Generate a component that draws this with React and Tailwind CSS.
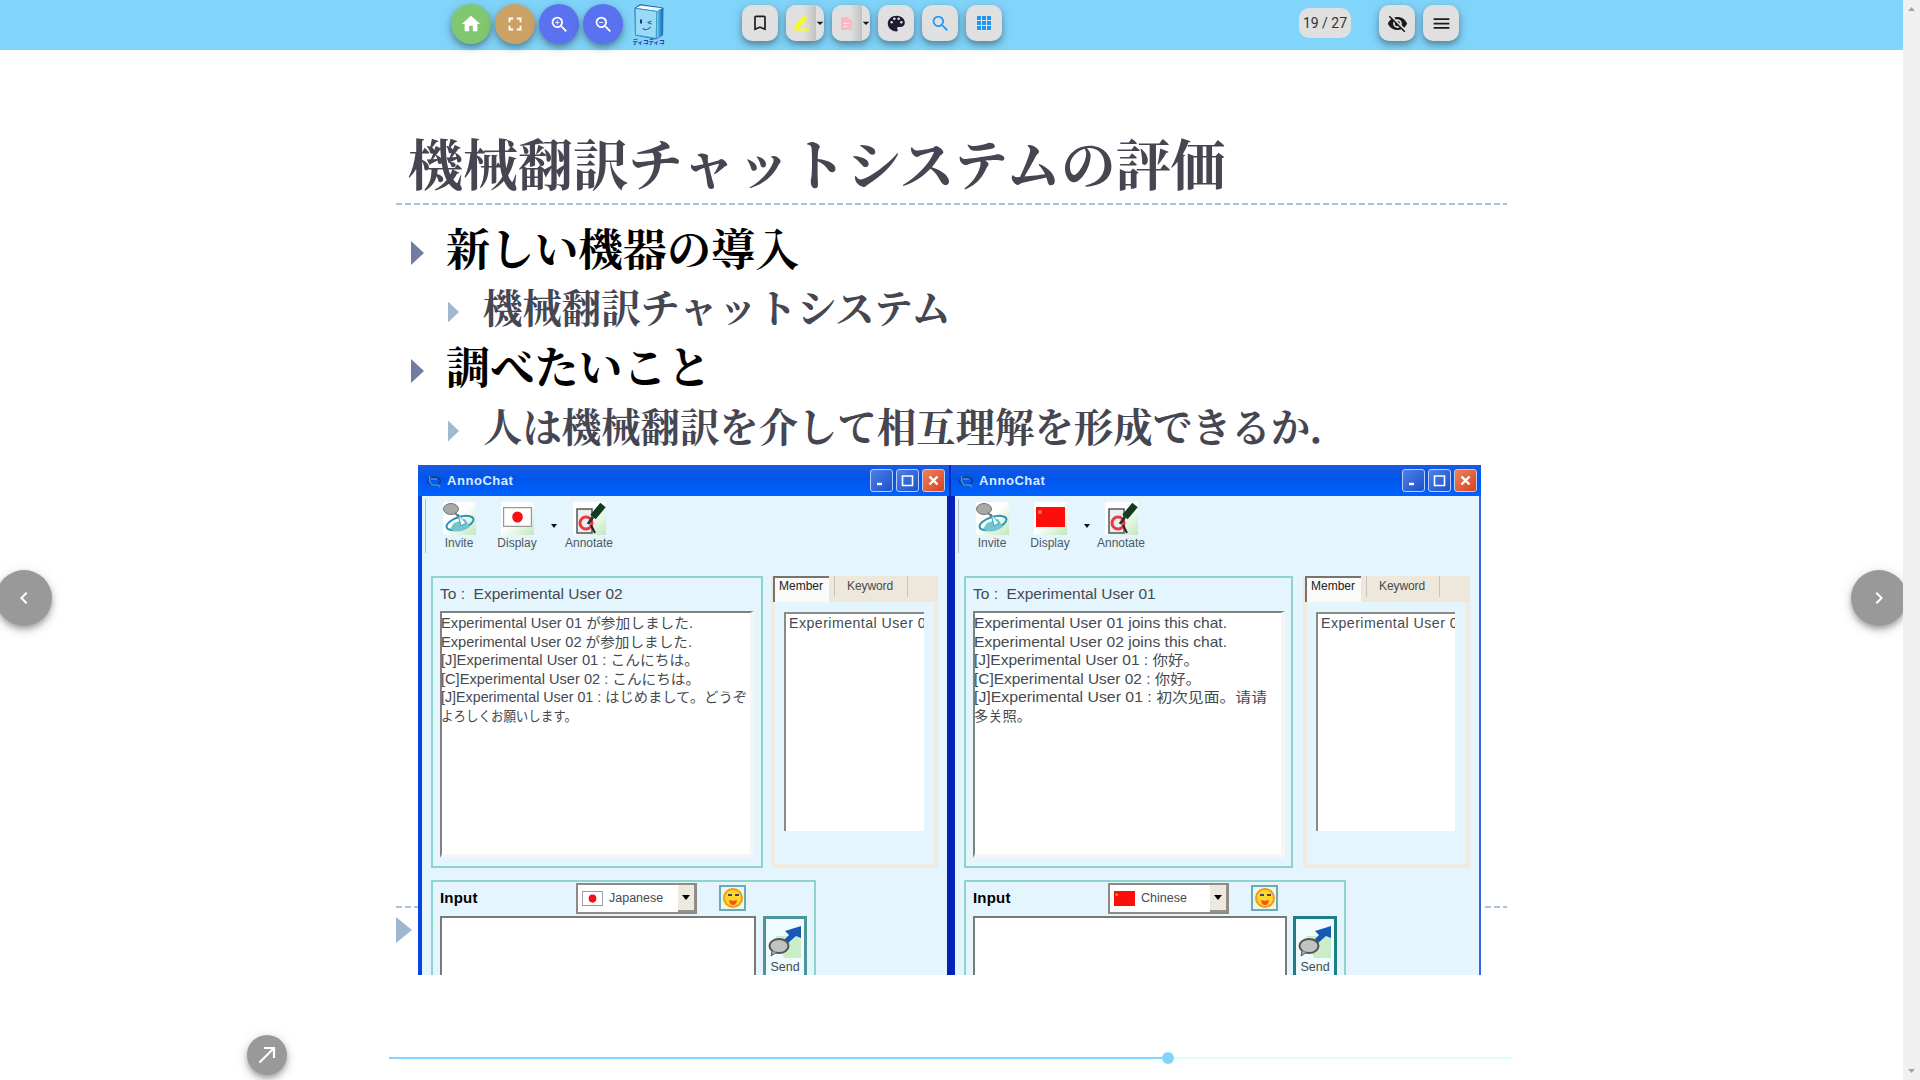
import React from "react";
import {
  MdHome, MdFullscreen, MdZoomIn, MdZoomOut, MdBookmarkBorder,
  MdSearch, MdMenu, MdArrowDropDown, MdChevronLeft, MdChevronRight,
} from "react-icons/md";

const elevation = "shadow-[0_3px_5px_rgba(0,0,0,0.22),0_5px_10px_rgba(0,0,0,0.14),0_1px_16px_rgba(0,0,0,0.08)]";
const tile = "flex h-9 w-9 items-center justify-center rounded-[10px] bg-[#e0e0e0] " + elevation;
const round = "flex h-10 w-10 items-center justify-center rounded-full text-white " + elevation;

function Mdi({ d, className = "" }) {
  return <svg viewBox="0 0 24 24" width="21" height="21" className={className} fill="currentColor"><path d={d} /></svg>;
}

function BookLogo() {
  return (
    <div className="ml-[10px] flex h-[42px] w-[31px] flex-col items-center">
      <svg width="30" height="36" viewBox="0 0 30 36" className="shrink-0">
        <defs>
          <linearGradient id="spine" x1="0" x2="1"><stop offset="0" stopColor="#7fe0f5" /><stop offset=".5" stopColor="#2f9fd8" /><stop offset="1" stopColor="#1c6fb5" /></linearGradient>
        </defs>
        <path d="M1 4 L6 .6 L29 4 L28.6 31 L22 35 L1.5 31Z" fill="#2b86c5" stroke="#2a6bb0" strokeWidth="1" />
        <path d="M2 4 L6.5 1.4 L28 4.2 L23 7Z" fill="#f4fbff" />
        <path d="M23 7.4 L28.6 4.6 L28.2 31 L22.6 34.4Z" fill="url(#spine)" />
        <path d="M1.2 4.4 L22.8 7.4 L22.2 34.4 L1.6 31Z" fill="#97dcf4" stroke="#3a8cc8" strokeWidth=".8" />
        <path d="M7 15.500v4" stroke="#2b2b9c" strokeWidth="2" />
        <path d="M13.500 18.500l4-1.200M14.500 19l3 1M8.500 24.500q4.500 3 8-1.500" stroke="#3b4fae" strokeWidth="1.100" fill="none" />
      </svg>
      <span className="-mt-px whitespace-nowrap font-['Noto_Sans_CJK_JP',sans-serif] text-[5.500px] font-black leading-[7px] text-[#3338a8]">ディコディコ</span>
    </div>
  );
}

function SplitTile({ children, className }) {
  return (
    <div className={"flex h-9 w-[38px] overflow-hidden rounded-[10px] bg-[#e0e0e0] " + elevation}>
      <div className={"flex w-[30px] items-center justify-center bg-linear-to-r from-[#e0e0e0] from-60% to-[#c2c2c2] " + className}>{children}</div>
      <div className="flex w-2 items-center justify-center"><MdArrowDropDown className="shrink-0 text-[#1b1b1b]" size={16} /></div>
    </div>
  );
}

function Header() {
  return (
    <header className="flex h-[50px] bg-[#81d4fa] pl-[451px]">
      <div className="flex gap-1 pt-1">
        <div className={round + " bg-[#81c670]"}><MdHome size={22} /></div>
        <div className={round + " bg-[#cba165]"}><MdFullscreen size={22} /></div>
        <div className={round + " bg-[#5b72f0]"}><MdZoomIn size={21} /></div>
        <div className={round + " bg-[#5b72f0]"}><MdZoomOut size={21} /></div>
      </div>
      <div className="w-[119px] pt-1"><BookLogo /></div>
      <div className="flex gap-2 pt-[5px] text-[#1b1b1b]">
        <div className={tile}><MdBookmarkBorder size={20} /></div>
        <SplitTile className="text-[#ffff00]">
          <svg width="15" height="15" viewBox="0 0 15 15" fill="currentColor"><path d="M0 12.500h15v2H0zM2 11V8.300L8.200 2.100l2.700 2.700L4.700 11zM9 1.400L10.100.3q.5-.5 1 0l1.600 1.600q.5.500 0 1L11.600 4z" /></svg>
        </SplitTile>
        <SplitTile className="text-[#ffb6c1]">
          <svg width="12" height="13" viewBox="0 0 12 13" fill="currentColor"><path d="M1.500 0H7l4 4v7.500A1.500 1.500 0 0 1 9.500 13h-8A1.500 1.500 0 0 1 0 11.500v-10A1.500 1.500 0 0 1 1.500 0Z" /><path d="M2.500 6.500h6M2.500 9.500h4" stroke="#efefef" strokeWidth="1.200" /></svg>
        </SplitTile>
        <div className={tile}><Mdi className="text-[#201c30]" d="M17.500,12A1.500,1.500 0 0,1 16,10.500A1.500,1.500 0 0,1 17.500,9A1.500,1.500 0 0,1 19,10.500A1.500,1.500 0 0,1 17.500,12M14.500,8A1.500,1.500 0 0,1 13,6.500A1.500,1.500 0 0,1 14.500,5A1.500,1.500 0 0,1 16,6.500A1.500,1.500 0 0,1 14.500,8M9.500,8A1.500,1.500 0 0,1 8,6.500A1.500,1.500 0 0,1 9.500,5A1.500,1.500 0 0,1 11,6.500A1.500,1.500 0 0,1 9.500,8M6.500,12A1.500,1.500 0 0,1 5,10.500A1.500,1.500 0 0,1 6.500,9A1.500,1.500 0 0,1 8,10.500A1.500,1.500 0 0,1 6.500,12M12,3C6.500,3 2,7 2,12C2,17 6.500,21 12,21A1.500,1.500 0 0,0 13.500,19.500C13.500,19.110 13.350,18.760 13.110,18.500C12.880,18.230 12.730,17.880 12.730,17.500A1.500,1.500 0 0,1 14.230,16H16A5,5 0 0,0 21.500,11C21.500,6.580 17.500,3 12,3Z" /></div>
        <div className={tile}><MdSearch size={21} className="text-[#2196f3]" /></div>
        <div className={tile}>
          <svg width="14" height="14" viewBox="0 0 14 14" fill="#2196f3">{[0, 5, 10].map((y) => [0, 5, 10].map((x) => <rect key={x + "-" + y} x={x} y={y} width="4" height="4" />))}</svg>
        </div>
      </div>
      <div className="ml-[297px] mt-2 flex h-[30px] w-[52px] items-center justify-center rounded-[10px] bg-[#e0e0e0] font-['Roboto',sans-serif] text-sm text-[#333]">19 / 27</div>
      <div className="ml-7 flex gap-2 pt-[5px] text-[#1b1b1b]">
        <div className={tile}><Mdi d="M11.830,9L15,12.160C15,12.110 15,12.050 15,12A3,3 0 0,0 12,9C11.940,9 11.890,9 11.830,9M7.530,9.800L9.080,11.350C9.030,11.560 9,11.770 9,12A3,3 0 0,0 12,15C12.220,15 12.440,14.970 12.650,14.920L14.200,16.470C13.530,16.800 12.790,17 12,17A5,5 0 0,1 7,12C7,11.210 7.200,10.470 7.530,9.800M2,4.270L4.280,6.550L4.730,7C3.080,8.300 1.780,10 1,12C2.730,16.390 7,19.500 12,19.500C13.550,19.500 15.030,19.200 16.380,18.660L16.810,19.080L19.730,22L21,20.730L3.270,3M12,7A5,5 0 0,1 17,12C17,12.640 16.870,13.260 16.640,13.820L19.570,16.750C21.070,15.500 22.270,13.860 23,12C21.270,7.610 17,4.500 12,4.500C10.600,4.500 9.260,4.750 8,5.200L10.170,7.350C10.740,7.130 11.350,7 12,7Z" /></div>
        <div className={tile}><MdMenu size={21} /></div>
      </div>
    </header>
  );
}

function Bullet({ sub, text, className }) {
  return (
    <li className={"flex items-center " + className}>
      <svg width="13" height="24" viewBox="0 0 13 24" className={sub ? "mt-[5px] shrink-0" : "mt-[6px] shrink-0"}><path d={sub ? "M0 1.500L11 12L0 22.500Z" : "M0 0L13 12L0 24Z"} fill={sub ? "#a0b8d0" : "#727ca3"} /></svg>
      <span className={"-mt-[5px] ml-[22px] whitespace-nowrap font-bold " + (sub ? "text-[39.400px] text-[#464653]" : "text-[44.200px] text-black")}>{text}</span>
    </li>
  );
}

function Flag({ cn, className = "" }) {
  return cn
    ? <svg viewBox="0 0 30 20" preserveAspectRatio="none" className={className}><path fill="#fa0f0c" d="M0 0h30v20H0z" /><circle cx="4" cy="5" r="2" fill="#ff8a1c" /></svg>
    : <svg viewBox="0 0 30 20" preserveAspectRatio="none" className={className}><path fill="#fff" stroke="#999" strokeWidth="1.500" d="M.5.5h29v19H.5z" /><circle cx="15" cy="10" r="5.500" fill="#fa1010" /></svg>;
}

function Tool({ label, className, children }) {
  return (
    <div className={"flex flex-col items-center " + className}>
      <div className="flex h-[33px] w-[33px] items-center justify-center bg-linear-to-br from-white from-45% to-[#bfe8bd]">{children}</div>
      <span className="whitespace-nowrap text-[12px] leading-4 text-[#505860]">{label}</span>
    </div>
  );
}

function CaptionButton({ close, children }) {
  return (
    <div className={"flex h-[23px] w-[23px] items-center justify-center rounded-[3px] border border-[#b9cdf5] " + (close ? "bg-linear-to-br from-[#f08058] to-[#d8401c]" : "bg-linear-to-br from-[#4c80ea] to-[#1f50cc]")}>
      <svg width="15" height="15" viewBox="0 0 15 15" stroke="white" fill="none" strokeWidth="2.400">{children}</svg>
    </div>
  );
}

function ChatWindow({ cn, to, lines, width }) {
  return (
    <section className={"flex h-[510px] flex-col overflow-hidden bg-[#e4f5fe] text-[#454a50] " + width}>
      <div className={"flex h-[31px] shrink-0 items-center bg-linear-to-b from-[#1a5be0] via-[#0055ea] via-40% to-[#0062ff] " + (cn ? "pl-[7px]" : "border-r-2 border-[#0a2cc0] pl-2")}>
        <svg width="16" height="16" viewBox="0 0 16 16" fill="none" stroke="#123b78" strokeWidth="1.400"><ellipse cx="8" cy="8" rx="6.500" ry="4" /><path d="M4 3Q2 8 6 12h6l2 2M5 6h6" stroke="#4c8fd8" /></svg>
        <span className="ml-[5px] w-[423px] text-[13px] font-bold tracking-[0.55px] text-[#dce9ff]">AnnoChat</span>
        <div className="flex gap-[3px]">
          <CaptionButton><path d="M3 11h5" /></CaptionButton>
          <CaptionButton><path d="M2.500 3h10v9.500h-10z" strokeWidth="1.600" /></CaptionButton>
          <CaptionButton close><path d="M3.500 3.500l8 8M11.500 3.500l-8 8" /></CaptionButton>
        </div>
      </div>
      <div className={"flex grow flex-col border-l-4 " + (cn ? "border-l-[#0524bc] border-r-2 border-r-[#2e68e8]" : "border-l-[#0a44e0] border-r-4 border-r-[#0420b8]")}>
        <div className="ml-[3px] mt-[3px] flex h-[54px] border-l border-[#b5bdc0]">
          <Tool label="Invite" className="ml-[11px] w-[44px] pt-[3px]">
            <svg width="33" height="33" viewBox="0 0 33 33" fill="none"><ellipse cx="17" cy="21" rx="14" ry="6" stroke="#2397b5" strokeWidth="2" transform="rotate(-18 17 21)" /><path d="M7 27q8 6 20-2l-5-8-11 4Z" fill="#72c5ce" /><path d="M15 12l8 9-5 3Z" fill="#e9fbff" stroke="#3ba4bb" /><ellipse cx="8" cy="7" rx="7.500" ry="5.500" fill="#a5aaa8" stroke="#777" /><path d="M12 11l4 4" stroke="#777" strokeWidth="2" /></svg>
          </Tool>
          <Tool label="Display" className="ml-[13px] w-[46px] pt-[3px]"><Flag cn={cn} className="mb-1 h-[20px] w-[29px]" /></Tool>
          <div className="ml-[11px] mt-[25px] h-[4px] w-[6px] bg-[#111] [clip-path:polygon(0_0,100%_0,50%_100%)]" />
          <Tool label="Annotate" className={(cn ? "ml-[4px]" : "ml-[5px]") + " w-[54px] pt-[3px]"}>
            <svg width="33" height="33" viewBox="0 0 33 33" fill="none"><path d="M4 7h15v24H4z" fill="#eaf0ee" stroke="#555" strokeWidth="1.500" /><circle cx="13" cy="21" r="6" stroke="#ee3540" strokeWidth="3" /><path d="M30 3L20 15" stroke="#123c20" strokeWidth="7" /><path d="M20 15l-5 7" stroke="#333" strokeWidth="3" /><path d="M18 23l4 8" stroke="#222" strokeWidth="2" /></svg>
          </Tool>
        </div>
        <div className="ml-[9px] mt-[23px] flex h-[292px] shrink-0">
          <div className={"flex shrink-0 flex-col border-2 border-[#8fd3cd] pl-[7px] " + (cn ? "w-[329px]" : "w-[332px]")}>
            <div className="h-[33px] whitespace-pre text-[15.500px] leading-[31px]">{to}</div>
            <div className={"h-[247px] border-l-2 border-t-2 border-r-4 border-b-4 border-l-[#81817e] border-t-[#81817e] border-b-[#f5f6f5] border-r-[#f5f6f5] bg-white text-[14.200px] leading-[18.500px] " + (cn ? "w-[312px]" : "w-[314px]")}>
              {lines.map((l) => (
                <svg key={l[0]} className="block overflow-visible" width={l[1]} height="18.500"><text x="-1" y="14.500" fill="#454a50" textLength={l[1]} lengthAdjust="spacingAndGlyphs">{l[0]}</text></svg>
              ))}
            </div>
          </div>
          <div className={"flex w-[167px] shrink-0 flex-col border-4 border-t-0 border-[#f0ebe1] " + (cn ? "ml-[10px]" : "ml-2")}>
            <div className="-mx-1 flex h-[26px] shrink-0 bg-[#eee8dc] text-[12px] leading-[20px]">
              <div className="ml-[2px] w-[56px] border-l-2 border-t-2 border-[#77736d] bg-[#fafaf8] pl-[4px] leading-[17px] text-[#222]">Member</div>
              <div className="ml-[5px] h-[21px] w-[74px] border-x border-[#c6c4bd] pl-[12px] tracking-[-0.1px]">Keyword</div>
            </div>
            <div className={"ml-[9px] mt-[10px] h-[219px] overflow-hidden border-l-2 border-t-2 border-[#8b8b88] bg-white pl-[3px] text-[14.200px] leading-[18.500px] " + (cn ? "w-[139px]" : "w-[140px]")}>
              <span className="whitespace-nowrap tracking-[0.45px]">Experimental User {cn ? "02" : "01"}</span>
            </div>
          </div>
        </div>
        <div className={"ml-[9px] mt-[12px] flex h-[110px] shrink-0 flex-col border-2 border-[#8fd3cd] pl-[7px] " + (cn ? "w-[382px]" : "w-[385px]")}>
          <div className="flex h-[34px] shrink-0">
            <b className={"text-[15px] leading-[31px] tracking-[0.2px] text-black " + (cn ? "w-[135px]" : "w-[136px]")}>Input</b>
            <div className="mt-px flex h-[31px] w-[121px] items-center border-2 border-[#918983] bg-white pl-1">
              <Flag cn={cn} className="h-[15px] w-[21px]" />
              <span className="ml-1.5 w-[69px] text-[12.500px]">{cn ? "Chinese" : "Japanese"}</span>
              <div className="flex h-[27px] w-[17px] items-center justify-center border-b-2 border-r border-[#96918a] bg-[#ece9df]"><div className="h-[5px] w-[8px] bg-black [clip-path:polygon(0_0,100%_0,50%_100%)]" /></div>
            </div>
            <div className="ml-[22px] mt-[3px] flex h-[26px] w-[27px] items-center justify-center border-2 border-[#6da9b8] bg-[#eaf8e8]">
              <svg width="22" height="22" viewBox="0 0 22 22"><circle cx="11" cy="11" r="9" fill="#ffd82b" stroke="#f5971d" strokeWidth="2" /><path d="M6 8h4M13 8h4" stroke="#446" strokeWidth="2" /><path d="M7 13q4 1.500 8 0-.5 5-4 5t-4-5Z" fill="#f45420" /></svg>
            </div>
          </div>
          <div className={"flex h-[74px] shrink-0 " + (cn ? "gap-[6px]" : "gap-[7px]")}>
            <div className={"border-2 border-[#777a77] bg-white " + (cn ? "w-[314px]" : "w-[316px]")} />
            <div className={"flex w-[44px] flex-col items-center border-[3px] bg-[#f0fbff] pt-[7px] " + (cn ? "border-[#1c7f85]" : "border-[#4c969b]")}>
              <svg width="34" height="32" viewBox="0 0 34 32" className="shrink-0"><path d="M8 10H33V32H16Z" fill="#c9edc6" /><path d="M15 15L21 9L17 5L33 0V12L28 10L20 17Z" fill="#1559b5" /><ellipse cx="11" cy="20" rx="9.500" ry="7" fill="#bfc3c2" stroke="#555" strokeWidth="2" /><path d="M4 25l-1 5 6-4" fill="#aaa" stroke="#555" /></svg>
              <span className="text-[12.500px] leading-[18px]">Send</span>
            </div>
          </div>
        </div>
      </div>
    </section>
  );
}

const Dashes = ({ w }) => <svg width={w} height="2" className="block shrink-0"><path d={"M0 1H" + w} stroke="#a9c2da" strokeWidth="2" strokeDasharray="6 3" /></svg>;

const japaneseLog = [
  ["Experimental User 01 が参加しました.", 252],
  ["Experimental User 02 が参加しました.", 251],
  ["[J]Experimental User 01 : こんにちは。", 258],
  ["[C]Experimental User 02 : こんにちは。", 259],
  ["[J]Experimental User 01 : はじめまして。どうぞ", 306],
  ["よろしくお願いします。", 136],
];
const chineseLog = [
  ["Experimental User 01  joins this chat.", 253],
  ["Experimental User 02  joins this chat.", 253],
  ["[J]Experimental User 01 : 你好。", 225],
  ["[C]Experimental User 02 : 你好。", 227],
  ["[J]Experimental User 01 : 初次见面。请请", 293],
  ["多关照。", 57],
];

function Slide() {
  return (
    <main className="flex h-[1030px] flex-col bg-white font-['Noto_Serif_CJK_JP','Noto_Sans_CJK_JP',serif]">
      <h1 className="ml-[408px] mt-[79px] h-[74px] whitespace-nowrap text-[55px] font-bold leading-[65px] text-[#464653]">機械翻訳チャットシステムの評価</h1>
      <div className="ml-[396px] flex"><Dashes w={1111} /></div>
      <ul className="ml-[411px] flex h-[260px] shrink-0 flex-col">
        <Bullet text="新しい機器の導入" className="mt-[13px] h-[64px]" />
        <Bullet sub text="機械翻訳チャットシステム" className="ml-[37px] h-[54px]" />
        <Bullet text="調べたいこと" className="h-[64px]" />
        <Bullet sub text="人は機械翻訳を介して相互理解を形成できるか．" className="ml-[37px] h-[56px]" />
      </ul>
      <div className="ml-[396px] flex h-[510px] shrink-0 font-['Liberation_Sans','Noto_Sans_CJK_JP','Noto_Sans_CJK_SC',sans-serif]">
        <div className="w-[22px] pt-[441px]">
          <Dashes w={22} />
          <svg width="16" height="26" viewBox="0 0 16 26" className="mt-[9px]"><path d="M0 0L16 13L0 26Z" fill="#9fb8d1" /></svg>
        </div>
        <ChatWindow to="To :  Experimental User 02" lines={japaneseLog} width="w-[533px]" />
        <ChatWindow cn to="To :  Experimental User 01" lines={chineseLog} width="w-[530px]" />
        <div className="ml-1 w-[22px] pt-[441px]"><Dashes w={22} /></div>
      </div>
      <div className="ml-[389px] mt-[77px] flex h-3 w-[1124px] shrink-0 items-center">
        <div className="h-[2px] w-[773px] bg-[#81d4fa]" />
        <div className="h-3 w-3 rounded-full bg-[#81d4fa]" />
        <div className="h-[2px] grow bg-[#d9ffff]" />
      </div>
    </main>
  );
}

export default function App() {
  return (
    <div className="relative flex h-[1080px] w-[1920px] overflow-hidden bg-white">
      <div className="relative w-[1903px] overflow-hidden">
        <Header />
        <Slide />
        <div className={"absolute -left-1 top-[570px] flex h-14 w-14 items-center justify-center rounded-full bg-[#999] text-white " + elevation}><MdChevronLeft size={24} /></div>
        <div className={"absolute -right-1 top-[570px] flex h-14 w-14 items-center justify-center rounded-full bg-[#999] text-white " + elevation}><MdChevronRight size={24} /></div>
        <div className={"absolute left-[247px] top-[1035px] flex h-10 w-10 items-center justify-center rounded-full bg-[#999] text-white " + elevation}>
          <svg width="24" height="24" viewBox="0 0 24 24" fill="none" stroke="white" strokeWidth="2.200"><path d="M4.500 19.500L18.500 5.500M9 5H19V15" /></svg>
        </div>
      </div>
      <div className="flex w-[17px] flex-col items-center justify-between bg-[#f0f0f0] py-[7px]">
        <div className="h-1 w-[7px] bg-[#a3a3a3] [clip-path:polygon(50%_0,100%_100%,0_100%)]" />
        <div className="h-1 w-[7px] bg-[#a3a3a3] [clip-path:polygon(0_0,100%_0,50%_100%)]" />
      </div>
    </div>
  );
}
